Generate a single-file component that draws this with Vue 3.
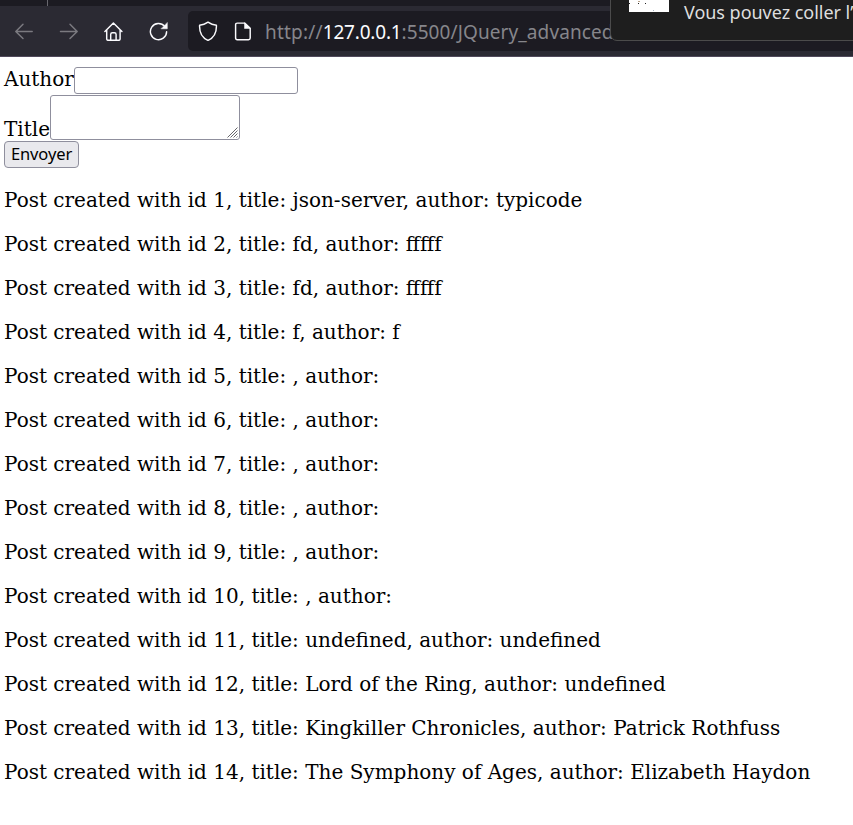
<script setup>
const posts = [
  { id: 1, title: 'json-server', author: 'typicode' },
  { id: 2, title: 'fd', author: 'fffff' },
  { id: 3, title: 'fd', author: 'fffff' },
  { id: 4, title: 'f', author: 'f' },
  { id: 5, title: '', author: '' },
  { id: 6, title: '', author: '' },
  { id: 7, title: '', author: '' },
  { id: 8, title: '', author: '' },
  { id: 9, title: '', author: '' },
  { id: 10, title: '', author: '' },
  { id: 11, title: 'undefined', author: 'undefined' },
  { id: 12, title: 'Lord of the Ring', author: 'undefined' },
  { id: 13, title: 'Kingkiller Chronicles', author: 'Patrick Rothfuss' },
  { id: 14, title: 'The Symphony of Ages', author: 'Elizabeth Haydon' },
]
</script>

<template>
  <div class="window">
    <header class="chrome">
      <div class="tabs"><div class="tab-edge"></div></div>
      <div class="toolbar">
        <nav class="nav">
          <svg class="icon dim" viewBox="0 0 20 20"><path d="M18.200 10.400H2M9 3.200L1.800 10.400 9 17.600" /></svg>
          <svg class="icon dim" viewBox="0 0 20 20"><path d="M1.500 10.400h16.500M11 3.200l7.200 7.200-7.200 7.200" /></svg>
          <svg class="icon" viewBox="0 0 20 20"><path d="M.9 10.500L9.400 2l8.500 8.500M2.700 9v9.100q0 1.200 1.200 1.200h11q1.200 0 1.200-1.200V9M6.700 19.300v-5.800q0-1.700 1.700-1.700h2q1.700 0 1.700 1.700v5.800" /></svg>
          <svg class="icon" viewBox="0 0 20 20"><path d="M15.700 5.400A8.100 8.100 0 1 0 17.600 10.700" /><path class="solid" d="M18.300 1.800v6h-6z" /></svg>
        </nav>
        <div class="address">
          <svg class="icon" viewBox="0 0 20 20"><path d="M10 1.200C7.500 3 4.500 4 1.600 4.300c-.3 6.500 1.700 12.200 8.400 15.100C16.700 16.500 18.700 10.800 18.400 4.300 15.500 4 12.500 3 10 1.200z" /></svg>
          <svg class="icon page-icon" viewBox="0 0 20 20"><path d="M4.300 2.100h7.400l5.500 5.200v9.700q0 1.700-1.700 1.700H4.300q-1.700 0-1.700-1.700V3.800q0-1.700 1.700-1.700z" /><path class="solid" d="M11.500 2v5.500h5.700z" /></svg>
          <div class="url"><span class="scheme">http://</span><span class="host">127.0.0.1</span><span class="path">:5500/JQuery_advanced/</span></div>
        </div>
      </div>
      <div class="popup">
        <svg class="preview" viewBox="0 0 40 12">
          <path fill="#fff" d="M0 0h40v12H0z" />
          <path fill="#222" d="M0 3h1v1H0zM9 3h1v1H9zM16 3h1v1h-1z" />
          <path fill="#bba58d" d="M9 1h2v1H9z" />
          <path fill="#a9b4c3" d="M24 10h1v1h-1z" />
        </svg>
        <span class="popup-text">Vous pouvez coller l’</span>
      </div>
    </header>
    <main class="content">
      <form class="form" @submit.prevent>
        <label class="row author"><span>Author</span><input type="text" /></label>
        <label class="row title"><span>Title</span>
          <span class="area"><textarea></textarea><svg class="grip" viewBox="0 0 11 11"><path d="M.5 10.500l10-10M3.500 10.500l7-7M6.500 10.500l4-4M9.500 10.500l1-1" /></svg></span>
        </label>
        <button type="submit">Envoyer</button>
      </form>
      <p v-for="post in posts" :key="post.id">Post created with id {{ post.id }}, title: {{ post.title }}, author: {{ post.author }}</p>
    </main>
  </div>
</template>

<style>
body { background: #fff; overflow: hidden; }
</style>

<style scoped>
* { box-sizing: border-box; }
.window { width: 853px; height: 825px; overflow: hidden; background: #fff; }
.chrome { position: relative; height: 57px; background: #2b2a33; border-bottom: 1px solid #50495b; overflow: hidden; }
.tabs { height: 6px; background: #1c1b22; padding-left: 47px; }
.tab-edge { width: 1px; height: 6px; background: #68676e; }
.toolbar { display: flex; height: 50px; padding-top: 5px; }
.nav { display: flex; align-items: center; gap: 25px; width: 188px; height: 40px; padding-left: 14px; flex: none; }
.icon { width: 20px; height: 20px; flex: none; fill: none; stroke: #fbfbfe; stroke-width: 1.450; stroke-linecap: round; stroke-linejoin: round; }
.dim { stroke: #7b7a80; }
.solid { fill: #fbfbfe; stroke-width: .5; }
.address { display: flex; align-items: center; flex: 1; height: 40px; padding-left: 10px; background: #1c1b22; border-radius: 5px 0 0 5px; }
.page-icon { margin-left: 15px; }
.url { margin-left: 12px; padding-top: 1px; font: 19px/40px "Noto Sans", sans-serif; color: #86868b; white-space: nowrap; }
.scheme { letter-spacing: .2px; }
.host { color: #fbfbfe; letter-spacing: -.2px; }
.path { letter-spacing: .1px; }
.popup { position: absolute; left: 610px; top: -10px; width: 260px; height: 51px; display: flex; padding: 10px 0 0 18px; background: #1e1e1e; border: 1px solid #4b4b4b; border-radius: 0 0 0 7px; }
.preview { width: 40px; height: 12px; margin-top: -1px; flex: none; shape-rendering: crispEdges; }
.popup-text { margin: -2px 0 0 15px; font: 18px/26px "Noto Sans", sans-serif; color: #dedede; letter-spacing: -.03px; white-space: nowrap; }
.content { padding: 10px 4px; color: #000; font: 20px/24px "DejaVu Serif", serif; }
.form { display: flex; flex-direction: column; align-items: flex-start; }
.row { display: flex; }
.author { height: 28px; line-height: 25px; }
.title { height: 46px; }
.title > span:first-child { padding-top: 22px; }
input, textarea { display: block; margin: 0; border: 1px solid #8f8f9d; border-radius: 3px; background: #fff; outline: none; }
input { width: 224px; height: 27px; }
.area { position: relative; width: 190px; height: 45px; }
textarea { width: 190px; height: 45px; resize: none; }
.grip { position: absolute; right: 2px; bottom: 2px; width: 11px; height: 11px; fill: none; stroke: #66666b; stroke-width: 1; }
button { width: 75px; height: 27px; padding: 0 0 2px; border: 1px solid #8f8f9d; border-radius: 4px; background: #e9e9ed; color: #000; font: 16.500px/23px "Noto Sans", sans-serif; letter-spacing: -.1px; }
p { margin: 20px 0; white-space: nowrap; }
</style>
